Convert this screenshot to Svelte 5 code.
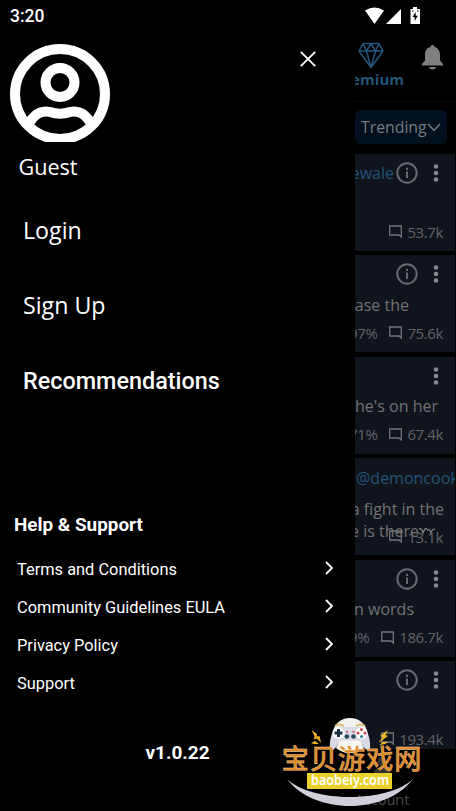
<script>
  const menu = ['Login', 'Sign Up'];
  const support = [
    'Terms and Conditions',
    'Community Guidelines EULA',
    'Privacy Policy',
    'Support'
  ];

  // inset = free space to the right of the title
  const posts = [
    { author: 'ewale', info: true, lines: [], inset: 0, percent: '', comments: '53.7k' },
    { info: true, lines: ['phrase the'], inset: 46, percent: '97%', comments: '75.6k' },
    { info: false, lines: ["she's on her"], inset: 17, percent: '71%', comments: '67.4k' },
    { wide: '@demoncook', info: false, lines: ['a fight in the', 'e is there'], inset: 11, wave: true, percent: '', comments: '13.1k' },
    { info: true, lines: ['in words'], inset: 41, percent: '99%', comments: '186.7k' },
    { info: true, lines: [], inset: 0, percent: '', comments: '193.4k' }
  ];
</script>

<div class="screen">
  <header class="status">
    <span class="time">3:20</span>
    <svg width="58" height="20" viewBox="0 0 58 20" fill="#fff">
      <path d="M0 4.500Q9.500-1.500 19 4.500L9.500 18Z" />
      <path d="M36 3V18H21Z" />
      <path d="M48 1h4v2h3v15H45.500V3H48z" />
      <path d="M50.500 6l-3 5h2.200v4l3.200-5.200h-2.200z" fill="#000" />
      <path d="M47 5h1.500M52 5h1.500" stroke="#000" />
    </svg>
  </header>

  <div class="body">
    <aside class="drawer">
      <div class="profile">
        <svg class="avatar" width="100" height="98" viewBox="0 0 100 98" fill="none" stroke="#fff" stroke-width="10">
          <circle cx="50" cy="50" r="45" />
          <circle cx="50" cy="38.500" r="14.500" />
          <path d="M20 78C26 68 34 66.500 40 68Q50 71.500 60 68C66 66.500 74 68 80 78" />
        </svg>
        <button class="close" aria-label="Close">
          <svg width="16" height="16" viewBox="0 0 16 16" stroke="#fff" stroke-width="1.800">
            <path d="M.8.800 15.200 15.200M15.200.800.800 15.200" />
          </svg>
        </button>
      </div>
      <div class="guest">Guest</div>

      <nav class="menu">
        {#each menu as item}
          <div class="menu-item">{item}</div>
        {/each}
        <div class="menu-item strong">Recommendations</div>
      </nav>

      <section class="support">
        <h2>Help &amp; Support</h2>
        {#each support as item}
          <div class="support-item">
            <span>{item}</span>
            <svg width="8" height="14" viewBox="0 0 8 14" fill="none" stroke="#fff" stroke-width="1.800">
              <path d="M1 1l6 6-6 6" />
            </svg>
          </div>
        {/each}
      </section>
      <div class="version">v1.0.22</div>
    </aside>

    <main class="feed">
      <div class="topbar">
        <div class="premium">
          <svg width="26" height="27" viewBox="0 0 26 27" fill="none" stroke="#225577" stroke-width="1.500" stroke-linejoin="round">
            <path d="M5 1.500H21L25 9 13 25.500 1 9ZM1 9H25M5 1.500 8.500 9 13 1.500 17.500 9 21 1.500M8.500 9 13 25.500 17.500 9" />
          </svg>
          <span>Premium</span>
        </div>
        <svg class="bell" width="21" height="25" viewBox="0 0 21 25" fill="#808080">
          <path d="M10.500 0c1.300 0 2 .8 2 2 4 1 5.500 4 5.500 8v5.500l3 3.500v1.500H0V19l3-3.500V10c0-4 1.500-7 5.500-8 0-1.200.7-2 2-2zM7 22h7c-.5 1.800-1.800 2.500-3.500 2.500S7.500 23.800 7 22z" />
        </svg>
      </div>

      <div class="sort">
        <span>Trending</span>
        <svg width="14" height="9" viewBox="0 0 14 9" fill="none" stroke="#747b82" stroke-width="1.500">
          <path d="M1 1l6 6.500L13 1" />
        </svg>
      </div>

      <div class="posts">
        {#each posts as post}
          <article class="post">
            <div class="post-head" class:left={post.wide}>
              {#if post.wide}
                <span class="author">{post.wide}</span>
              {:else}
                {#if post.author}<span class="author">{post.author}</span>{/if}
                {#if post.info}
                  <svg class="info" width="22" height="22" viewBox="0 0 22 22" fill="none" stroke="#686a6e" stroke-width="2">
                    <circle cx="11" cy="11" r="9.700" />
                    <path d="M11 9.500V16M11 5.800V8" />
                  </svg>
                {/if}
                <svg width="6" height="18" viewBox="0 0 6 18" fill="#85878a">
                  <circle cx="3" cy="2.500" r="2.300" />
                  <circle cx="3" cy="9" r="2.300" />
                  <circle cx="3" cy="15.500" r="2.300" />
                </svg>
              {/if}
            </div>
            <div class="title" style="padding-right: {post.inset}px">
              {#each post.lines as line, i}
                <div class="line">
                  {line}
                  {#if post.wave && i === 1}
                    <svg width="17" height="8" viewBox="0 0 17 8" fill="none" stroke="#808286" stroke-width="1.200">
                      <path d="M0 2Q2 0 4 6 6 0 8 2M8 4Q10 0 12 6 14 0 16 3" />
                    </svg>
                  {/if}
                </div>
              {/each}
            </div>
            <div class="stats">
              {#if post.percent}<span>{post.percent}</span>{/if}
              <svg width="13" height="13" viewBox="0 0 13 13" fill="none" stroke="#747578" stroke-width="1.300">
                <path d="M.7 1H12.300V12L10 10H.7Z" />
              </svg>
              <span>{post.comments}</span>
            </div>
          </article>
        {/each}
      </div>

      <footer class="tab">
        <svg width="16" height="18" viewBox="0 0 16 18" fill="#303030">
          <circle cx="8" cy="4.500" r="4.500" />
          <path d="M0 18v-3c0-6 16-6 16 0v3z" />
        </svg>
        <span>Account</span>
      </footer>
    </main>
  </div>

  <div class="badge">
    <svg width="150" height="96" viewBox="0 0 150 96">
      <!-- gamepad -->
      <ellipse cx="70" cy="18" rx="17" ry="15" fill="#f3f2ef" />
      <path d="M56 12Q59 10 63 12H77Q81 10 84 12C88 15 91 27 90 34 86 38 83 30 80 26H60C57 30 54 38 50 34 49 27 52 15 56 12Z" fill="#d9dae5" />
      <path d="M56 33Q59 25.500 63 25.500H77Q81 25.500 84 33Q78 38 70 38T56 33Z" fill="#f8f6f1" />
      <path d="M55 10.500q4-2 9 .5M76 11q4-2.500 9-.5" stroke="#d9b45a" fill="none" stroke-width="1.500" />
      <circle cx="58.500" cy="18" r="6" fill="#fff" />
      <circle cx="81.500" cy="18" r="6" fill="#fff" />
      <path d="M58.500 14v8M54.500 18h8" stroke="#173345" stroke-width="3" />
      <g fill="#c9424d">
        <circle cx="81.500" cy="14.500" r="1.500" />
        <circle cx="85" cy="18" r="1.500" />
        <circle cx="78" cy="18" r="1.500" />
        <path d="M66 16h2v1.500h-2zM72.500 16h2v1.500h-2z" />
      </g>
      <circle cx="81.500" cy="21.500" r="1.500" fill="#278298" />
      <circle cx="66.800" cy="21.500" r="2.300" fill="#234c5d" />
      <circle cx="73.500" cy="21.500" r="2.300" fill="#234c5d" />
      <!-- sparks -->
      <g fill="#efb520">
        <path d="M31.500 15l5.500 4-.5 2.500 3-.5 1.500 7-4-4.500-3 1 .5-3.500z" />
        <path d="M31 28l4-2 4 3-5 0z" />
        <path d="M108 15l-8 6 2.500 1-4 6 9.500-7-2.500-1z" />
        <path d="M108 27l-5 0-4 3 6-1z" />
      </g>
      <path d="M7 64C32 88 108 88 133 64 106 100 34 100 7 64Z" fill="#d0cfdc" />
      <rect x="27" y="58" width="85" height="16" fill="#ead02b" />
      <text class="cn" x="1.500" y="54" textLength="140">宝贝游戏网</text>
      <text class="url" x="31" y="70" textLength="78" lengthAdjust="spacingAndGlyphs">baobeiy.com</text>
    </svg>
  </div>
</div>

<style>
  :global(body) {
    margin: 0;
    background: #000;
  }

  .screen {
    position: relative;
    width: 456px;
    height: 811px;
    overflow: hidden;
    background: #000;
    color: #fff;
    font-family: 'Open Sans', sans-serif;
  }

  svg {
    display: block;
    flex: none;
  }

  .status {
    display: flex;
    align-items: center;
    justify-content: space-between;
    box-sizing: border-box;
    height: 32px;
    padding: 0 33px 0 10px;
  }

  .time {
    font: 500 17.5px Roboto, sans-serif;
  }

  .body {
    display: grid;
    grid-template-columns: 355px 101px;
    height: 779px;
  }

  .drawer {
    display: flex;
    flex-direction: column;
    min-width: 0;
  }

  .profile {
    display: flex;
    justify-content: space-between;
    padding: 12px 39px 0 10px;
  }

  .close {
    align-self: flex-start;
    margin-top: 7px;
    padding: 0;
    border: none;
    background: none;
  }

  .guest {
    height: 51px;
    padding-left: 18.5px;
    font-size: 21.6px;
    line-height: 50px;
  }

  .menu-item {
    height: 75px;
    padding-left: 23px;
    font-size: 23.2px;
    line-height: 75px;
  }

  .menu-item.strong {
    font: 500 23.4px/77px Roboto, sans-serif;
  }

  .support {
    margin-top: 88px;
    font-family: Roboto, sans-serif;
  }

  h2 {
    margin: 0 0 6px 14px;
    font-size: 18.9px;
    font-weight: 700;
    line-height: 38px;
  }

  .support-item {
    display: flex;
    align-items: center;
    justify-content: space-between;
    height: 38px;
    padding: 0 21px 0 17px;
    font-size: 16.4px;
  }

  .support-item svg {
    margin: 0 1px 2px 0;
  }

  .version {
    margin-top: 39px;
    text-align: center;
    font: 700 19px/24px Roboto, sans-serif;
  }

  .feed {
    display: flex;
    flex-direction: column;
    overflow: hidden;
  }

  .topbar {
    display: flex;
    flex: none;
    justify-content: flex-end;
    box-sizing: border-box;
    height: 70px;
    padding: 10px 13px 0 0;
    border-bottom: 1px solid #090909;
  }

  .premium {
    display: flex;
    flex: none;
    flex-direction: column;
    align-items: center;
    margin-right: 18px;
    color: #225577;
    font-size: 15px;
    font-weight: 700;
    line-height: 20px;
  }

  .premium svg {
    margin-left: 2px;
  }

  .bell {
    margin-top: 3px;
  }

  .sort {
    display: flex;
    flex: none;
    align-items: center;
    justify-content: space-between;
    box-sizing: border-box;
    width: 92px;
    height: 34px;
    margin: 8px 0 10px;
    padding: 0 6px;
    border-radius: 6px;
    background: #010f1e;
    color: #747b82;
    font-size: 15.8px;
  }

  .posts {
    display: flex;
    flex: none;
    flex-direction: column;
    gap: 4.4px;
    width: 100px;
    height: 595px;
    overflow: hidden;
  }

  .post {
    display: flex;
    flex: none;
    flex-direction: column;
    height: 97px;
    overflow: hidden;
    background: #10141d;
    color: #707276;
    white-space: nowrap;
  }

  .post-head {
    display: flex;
    flex: none;
    align-items: center;
    justify-content: flex-end;
    height: 38px;
    padding-right: 16px;
  }

  .post-head.left {
    justify-content: flex-start;
    height: 39px;
    padding-left: 1px;
  }

  .author {
    color: #225577;
    font-size: 16px;
  }

  .info {
    margin: 0 15px 0 2px;
  }

  .title {
    flex: none;
    height: 28px;
    padding-top: 0.6px;
    font-size: 16px;
    line-height: 22px;
  }

  .line {
    display: flex;
    align-items: center;
    justify-content: flex-end;
  }

  .line svg {
    margin-right: 8px;
  }

  .stats {
    display: flex;
    align-items: center;
    justify-content: flex-end;
    height: 22px;
    padding-right: 12px;
    color: #626468;
    font-size: 15px;
    letter-spacing: -0.4px;
  }

  .stats svg {
    margin: 0 5px 0 12px;
  }

  .tab {
    display: flex;
    flex-direction: column;
    align-items: center;
    width: 54px;
    padding-top: 8px;
    color: #484848;
    font-size: 14.5px;
    line-height: 20px;
  }

  .tab span {
    margin-top: 15px;
  }

  .badge {
    position: absolute;
    left: 280px;
    top: 715px;
  }

  .cn {
    fill: #e08a26;
    stroke: #f5dfbd;
    stroke-width: 0.3px;
    font: 500 27.5px 'Noto Sans CJK SC', sans-serif;
  }

  .url {
    fill: #fff;
    font: 600 15px 'Noto Sans', sans-serif;
  }
</style>
